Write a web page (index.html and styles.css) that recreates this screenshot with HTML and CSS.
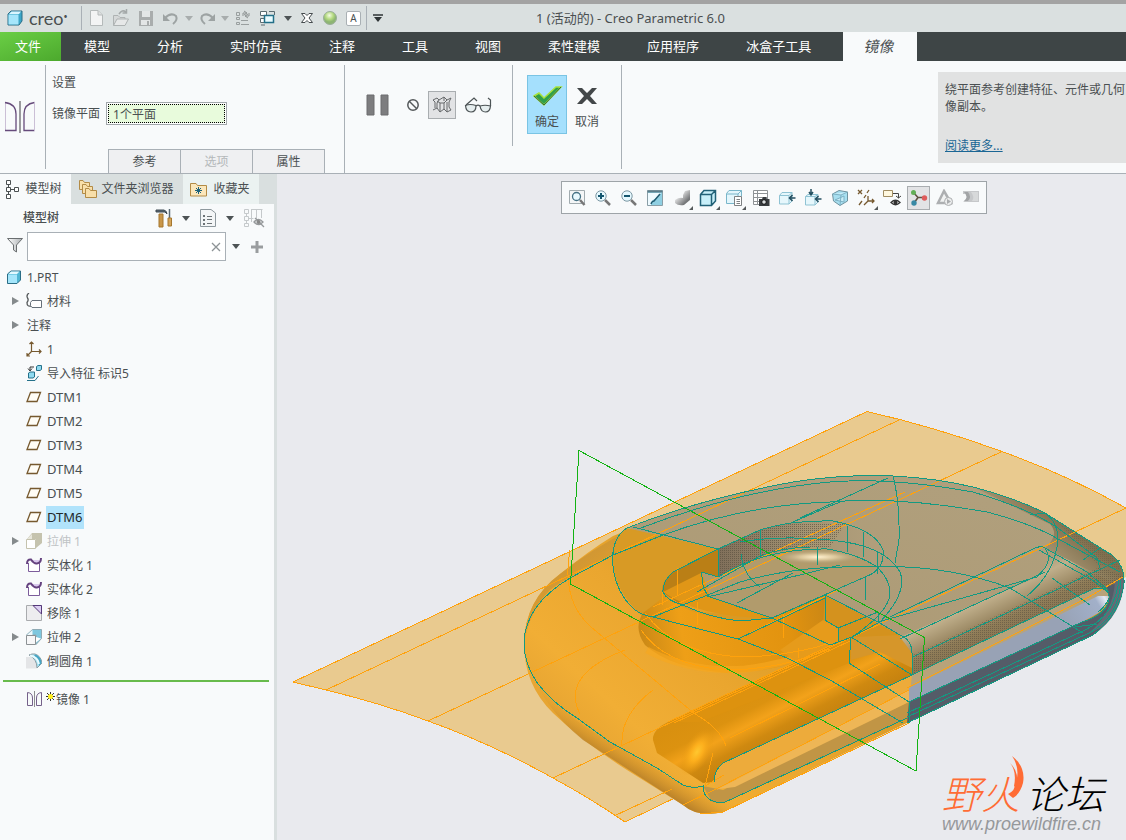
FILE: index.html
```html
<!DOCTYPE html>
<html lang="zh-CN">
<head>
  <meta charset="UTF-8">
  <meta name="viewport" content="width=device-width, initial-scale=1.0">
  <title>1 (活动的) - Creo Parametric 6.0</title>
  <link rel="stylesheet" href="styles.css">
</head>
<body>
  <header class="titlebar">
    <div class="brand">
      <svg width="16" height="16" viewBox="0 0 16 16"><path d="M1 4L4 1H15V11L12 15H1Z" fill="#3ba6c8" stroke="#2b6d86"/><path d="M1.500 4.500H11.500V14.500H1.500Z" fill="#a5e6fb"/><path d="M2 4L4.500 1.500H14L12 4Z" fill="#d9f6ff"/></svg>
      <span class="brand-name">creo<sup>•</sup></span>
    </div>
    <div class="quick">
      <button aria-label="新建"><svg width="16" height="18" viewBox="0 0 16 18"><path d="M2.500 1.500H10L14.500 6V16.500H2.500Z" fill="#f3f4f4" stroke="#b5baba"/><path d="M10 1.500V6H14.500" fill="#dcdfdf" stroke="#b5baba"/></svg></button>
      <button aria-label="打开"><svg width="18" height="18" viewBox="0 0 18 18"><path d="M1.500 16.500V6.500H6L8 8.500H13V10" fill="#d5d8d8" stroke="#aeb3b3"/><path d="M1.500 16.500L5 10H16.500L13 16.500Z" fill="#e6e8e8" stroke="#aeb3b3"/><path d="M7 5Q10 0 14 3M14.500 0V4H10.500" fill="none" stroke="#a4a9a9" stroke-width="1.500"/></svg></button>
      <button aria-label="保存"><svg width="16" height="18" viewBox="0 0 16 18"><path d="M1 2H15V17H1Z" fill="#a9adad"/><path d="M4 2H12V8H4ZM3 11H12V16H3Z" fill="#e3e6e6"/><path d="M9 12h2v4h-2z" fill="#a9adad"/></svg></button>
      <button aria-label="撤消"><svg width="18" height="16" viewBox="0 0 18 16"><path d="M3 8Q9 2 14 6Q16 10 11 14" fill="none" stroke="#9da3a3" stroke-width="2"/><path d="M1 4V11H8Z" fill="#9da3a3"/></svg></button>
      <span class="caret dim"></span>
      <button aria-label="重做"><svg width="18" height="16" viewBox="0 0 18 16"><path d="M15 8Q9 2 4 6Q2 10 7 14" fill="none" stroke="#9da3a3" stroke-width="2"/><path d="M17 4V11H10Z" fill="#9da3a3"/></svg></button>
      <span class="caret dim"></span>
      <button aria-label="重新生成"><svg width="16" height="16" viewBox="0 0 16 16"><path d="M1.500 2.500h3v3h-3zM1.500 7.500h3v2h-3zM1.500 12.500h3v2h-3zM6 10.500h7M6 14.500h8" fill="none" stroke="#999f9f"/><path d="M8 6V3H11M9 1l3 2-3 2M14 3V6H11M13 8L10 6l3-2" fill="none" stroke="#8e9494"/></svg></button>
      <button aria-label="窗口"><svg width="17" height="16" viewBox="0 0 17 16"><path d="M1.500 1.500H7.500V5.500H1.500ZM1.500 8.500H6.500V12.500H1.500Z" fill="#fff" stroke="#5c6b70"/><path d="M10 1.500H15.500V5" fill="none" stroke="#5c6b70"/><path d="M5.500 5.500H14.500V12.500H5.500Z" fill="#e9fbff" stroke="#236f88" stroke-width="1.500"/><path d="M2 15h4" stroke="#5c6b70"/></svg></button>
      <span class="caret"></span>
      <button aria-label="关闭"><svg width="14" height="14" viewBox="0 0 14 14"><path d="M1.500 2.500H5L7 4.500L9 2.500H12.500L9 7L12.500 11.500H9L7 9.500L5 11.500H1.500L5 7Z" fill="#fff" stroke="#454b4e"/></svg></button>
      <button aria-label="着色"><svg width="16" height="16" viewBox="0 0 16 16"><defs><radialGradient id="ball" cx=".45" cy=".3"><stop offset="0" stop-color="#f4fbe5"/><stop offset=".6" stop-color="#b4da80"/><stop offset="1" stop-color="#8db573"/></radialGradient></defs><circle cx="8" cy="8" r="6.500" fill="url(#ball)" stroke="#9aae9a"/></svg></button>
      <button class="letter-button" aria-label="文本">A</button>
    </div>
    <button class="customize" aria-label="自定义"><svg width="10" height="8" viewBox="0 0 10 8"><path d="M0 1H10" stroke="#2e3436" stroke-width="1.500"/><path d="M1 3H9L5 8Z" fill="#2e3436"/></svg></button>
    <h1 class="window-title">1 (活动的) - Creo Parametric 6.0</h1>
  </header>

  <nav class="tabs">
    <a class="file" href="#">文件</a>
    <div class="tab-list">
      <a href="#">模型</a>
      <a href="#">分析</a>
      <a href="#">实时仿真</a>
      <a href="#">注释</a>
      <a href="#">工具</a>
      <a href="#">视图</a>
      <a href="#">柔性建模</a>
      <a href="#">应用程序</a>
      <a href="#">冰盒子工具</a>
    </div>
    <a class="current" href="#">镜像</a>
  </nav>

  <section class="ribbon">
    <div class="feature-icon">
      <svg width="32" height="34" viewBox="0 0 32 34"><path d="M1.500 31V2.500" stroke="#cbbfd6"/><path d="M1 2.500Q12 4 12 14V30.500H1M30.500 2.500Q20 4 20 14V30.500H30.500" fill="none" stroke="#664b7b" stroke-width="1.300"/><path d="M30.500 31V2.500" stroke="#cbbfd6"/><path d="M16 1V33" stroke="#9a9a9d" stroke-width="2"/></svg>
    </div>
    <div class="settings">
      <h2>设置</h2>
      <div class="field">
        <label for="plane">镜像平面</label>
        <span class="plane-box"><input id="plane" type="text" value="1个平面"></span>
      </div>
      <div class="panel-tabs">
        <button>参考</button>
        <button disabled>选项</button>
        <button>属性</button>
      </div>
    </div>
    <div class="preview">
      <button aria-label="暂停"><svg width="24" height="24" viewBox="0 0 24 24"><path d="M1 2h7v20H1zM15 2h7v20h-7z" fill="#7d7d7f" stroke="#6c6c6e"/></svg></button>
      <button class="none" aria-label="无预览"><svg width="14" height="14" viewBox="0 0 14 14"><circle cx="7" cy="7" r="5.200" fill="none" stroke="#55595b" stroke-width="1.500"/><path d="M3 3L11 11" stroke="#55595b" stroke-width="1.500"/></svg></button>
      <button class="pressed" aria-label="附加预览"><svg width="20" height="18" viewBox="0 0 20 18"><path d="M1 4L5 2L7 4L5 7V12L1 14M1 4L3 6V12M7 4L12 1L15 4L12 7L8 7L5 5M8 7V16L12 13V7M5 12L8 16M15 4L19 2L17 6V11L19 14L15 16V6M12 13L15 16M12 1V5" fill="none" stroke="#66696b"/></svg></button>
      <button aria-label="校验"><svg width="28" height="18" viewBox="0 0 28 18"><path d="M1.500 9.500Q6 7.500 12 9.500Q12 16 7 16T1.500 9.500ZM16 10Q21 8.500 26.500 10Q26 16 21.500 16T16 10Z" fill="#e6eeef" stroke="#4c5355" stroke-width="1.200"/><path d="M2 9L10 2L13 5M12 10Q14 8 16 10M26.500 10V4L24 2" fill="none" stroke="#4c5355" stroke-width="1.200"/></svg></button>
    </div>
    <div class="confirm">
      <button class="ok"><svg width="32" height="30" viewBox="0 0 32 30"><path d="M3 16L8 13L13 18L25 7H30L13 25Z" fill="#2f9f4a" stroke="#a8e23b" stroke-width="1.500"/><path d="M3 16L13 25L30 7" fill="none" stroke="#34663d"/></svg>确定</button>
      <button class="cancel"><svg width="32" height="30" viewBox="0 0 32 30"><path d="M6 8H11L16 13L21 8H26L19 16L26 24H21L16 19L11 24H6L13 16Z" fill="#434749"/></svg>取消</button>
    </div>
    <aside class="help">
      <p>绕平面参考创建特征、元件或几何<br>像副本。</p>
      <a href="#">阅读更多...</a>
    </aside>
  </section>

  <main class="workspace">
    <aside class="navigator">
      <div class="nav-tabs">
        <button class="active"><svg width="14" height="20" viewBox="0 0 14 20"><path d="M1.500 1.500h4v4h-4zM1.500 8.500h4v4h-4zM1.500 15.500h4v4h-4zM9.500 8.500h4v4h-4zM3.500 5.500v3M3.500 12.500v3M5.500 10.500h4" fill="#fff" stroke="#4b5052"/></svg>模型树</button>
        <button class="browser"><svg width="20" height="20" viewBox="0 0 20 20"><g stroke="#b38b46" fill="#f8dfaa"><path d="M1.500 10.500V1.500H5L6.500 3.500H11.500V10.500Z"/><path d="M4.500 14.500V5.500H8L9.500 7.500H14.500V14.500Z"/><path d="M7.500 18.500V9.500H11L12.500 11.500H18.500V18.500Z"/></g></svg>文件夹浏览器</button>
        <button class="favorites"><svg width="17" height="16" viewBox="0 0 17 16"><path d="M.5 15V2.500H6L7.500 4.500H16.500V15Z" fill="#fbe7bb" stroke="#b38b46"/><path d="M8.500 6V13M5 9.500H12M6 7L11 12M11 7L6 12" stroke="#19617c"/></svg>收藏夹</button>
      </div>
      <div class="tree-head">
        <h2>模型树</h2>
        <button aria-label="设置"><svg width="18" height="20" viewBox="0 0 18 20"><path d="M1 2H9Q12 3 12 6L10 4H1Z" fill="#5a6974" stroke="#3f4a52"/><path d="M4 6H8V19H4Z" fill="#c99649" stroke="#a5772f"/><path d="M14.500 1V10" stroke="#5a6974" stroke-width="1.500"/><path d="M13 10H16.500V18H13Z" fill="#d5a55a" stroke="#a5772f"/></svg></button>
        <span class="caret"></span>
        <button aria-label="显示"><svg width="18" height="20" viewBox="0 0 18 20"><path d="M1.500 1.500H12L16.500 5V18.500H1.500Z" fill="#f4f6f7" stroke="#8e989d"/><path d="M8 8.500H13M8 11.500H13M8 15.500H13" stroke="#6c7376"/><path d="M4 7h2v2H4zM4 11h2v2H4zM4 15h2v2H4z" fill="#6c7376"/></svg></button>
        <span class="caret"></span>
        <button aria-label="隐藏项"><svg width="22" height="20" viewBox="0 0 22 20"><path d="M1.500 1.500h4v4h-4zM1.500 8.500h4v4h-4zM1.500 15.500h4v3h-4zM3.500 5.500v3M3.500 12.500v3M5.500 10.500h5M8.500 1V14M13.500 1V12M18.500 1V10M8.500 1.500h11" fill="none" stroke="#c5c9cb"/><path d="M11 14Q15.500 9 20 14Q15.500 19 11 14ZM12 10L21 19" fill="#e9ebec" stroke="#96999b" stroke-width="1.300"/><circle cx="15.500" cy="14" r="2" fill="#888"/></svg></button>
      </div>
      <div class="search">
        <label for="filter" aria-label="过滤器"><svg width="18" height="16" viewBox="0 0 18 16"><defs><linearGradient id="funnel"><stop offset="0" stop-color="#fff"/><stop offset="1" stop-color="#a9adb0"/></linearGradient></defs><path d="M1.500 1.500H16.500L10.500 8V15L7.500 13V8Z" fill="url(#funnel)" stroke="#6a6e70"/></svg></label>
        <div class="search-box">
          <input id="filter" type="text">
          <button aria-label="清除"><svg width="10" height="10" viewBox="0 0 10 10"><path d="M1 1L9 9M9 1L1 9" stroke="#8d9396" stroke-width="1.300"/></svg></button>
        </div>
        <span class="caret"></span>
        <button aria-label="添加"><svg width="12" height="12" viewBox="0 0 12 12"><path d="M6 0V12M0 6H12" stroke="#9a9d9f" stroke-width="3"/></svg></button>
      </div>

      <ul class="tree">
        <li class="root"><svg width="16" height="16" viewBox="0 0 16 16"><path d="M1.500 5L5 2H14.500V11L11 14.500H1.500Z" fill="#4fb6d3" stroke="#2b6d86"/><path d="M2 5.500H11V14H2Z" fill="#a5e6fb"/><path d="M2.500 5L5 2.500H13.500L11 5Z" fill="#e2f9ff"/></svg><span>1.PRT</span></li>
        <li><button class="arrow" aria-label="展开"></button><svg width="16" height="16" viewBox="0 0 16 16"><path d="M3 0Q0 2 1.500 5Q3 7 1 9.500Q1 14 5 13" fill="none" stroke="#55595b" stroke-width="1.300"/><path d="M4.500 9.500L6 7.500H15.500V14.500H6L4.500 12.500Z" fill="#fff" stroke="#66707a"/></svg><span>材料</span></li>
        <li class="no-icon"><button class="arrow" aria-label="展开"></button><span>注释</span></li>
        <li><svg width="16" height="16" viewBox="0 0 16 16"><path d="M5.500 1V10.500H15M5.500 10.500L1 15M3.500 3L5.500 1L7.500 3M13 8.500L15 10.500L13 12.500M1 12V15H4" fill="none" stroke="#76592f" stroke-width="1.200"/></svg><span>1</span></li>
        <li><svg width="16" height="16" viewBox="0 0 16 16"><path d="M10.500 1.500L12 .5H15.500V4.500L14 5.500H10.500Z" fill="#8fdaf0" stroke="#25718a"/><path d="M8 2H4V5M2 3.500L4 6L6 3.500" fill="none" stroke="#333"/><path d="M2.500 8L4 7H8.500V12L7 13H2.500Z" fill="#8fdaf0" stroke="#25718a"/><path d="M1 15.500H9L12.500 11" fill="none" stroke="#25718a"/></svg><span>导入特征 标识5</span></li>
        <li class="datum"><svg width="16" height="16" viewBox="0 0 16 16"><path d="M4.500 3.500H14.500L11 12.500H1Z" fill="#fffdf6" stroke="#76592f" stroke-width="1.300"/></svg><span>DTM1</span></li>
        <li class="datum"><svg width="16" height="16" viewBox="0 0 16 16"><path d="M4.500 3.500H14.500L11 12.500H1Z" fill="#fffdf6" stroke="#76592f" stroke-width="1.300"/></svg><span>DTM2</span></li>
        <li class="datum"><svg width="16" height="16" viewBox="0 0 16 16"><path d="M4.500 3.500H14.500L11 12.500H1Z" fill="#fffdf6" stroke="#76592f" stroke-width="1.300"/></svg><span>DTM3</span></li>
        <li class="datum"><svg width="16" height="16" viewBox="0 0 16 16"><path d="M4.500 3.500H14.500L11 12.500H1Z" fill="#fffdf6" stroke="#76592f" stroke-width="1.300"/></svg><span>DTM4</span></li>
        <li class="datum"><svg width="16" height="16" viewBox="0 0 16 16"><path d="M4.500 3.500H14.500L11 12.500H1Z" fill="#fffdf6" stroke="#76592f" stroke-width="1.300"/></svg><span>DTM5</span></li>
        <li class="datum selected"><svg width="16" height="16" viewBox="0 0 16 16"><path d="M4.500 3.500H14.500L11 12.500H1Z" fill="#fffdf6" stroke="#76592f" stroke-width="1.300"/></svg><span>DTM6</span></li>
        <li class="suppressed"><button class="arrow" aria-label="展开"></button><svg width="16" height="16" viewBox="0 0 16 16"><path d="M1 6L6 0H16V10L10 15V6Z" fill="#c5c3ae"/><path d="M.5 6.500H9.500V15.500H.5Z" fill="#fff" stroke="#c5c3ae"/><path d="M1 6L6 1V6Z" fill="#e7e6dc"/></svg><span>拉伸 1</span></li>
        <li><svg width="16" height="16" viewBox="0 0 16 16"><path d="M2.500 6V14.500H13.500V6" fill="#fff" stroke="#7c5c9b"/><path d="M5 3Q8 8 11 7L14 5L13 3Z" fill="#d9c8ec"/><path d="M1 7Q1 2 5 2.500Q8 7 11 6.500Q15 6 15 1" fill="none" stroke="#65427f" stroke-width="2"/></svg><span>实体化 1</span></li>
        <li><svg width="16" height="16" viewBox="0 0 16 16"><path d="M2.500 6V14.500H13.500V6" fill="#fff" stroke="#7c5c9b"/><path d="M5 3Q8 8 11 7L14 5L13 3Z" fill="#d9c8ec"/><path d="M1 7Q1 2 5 2.500Q8 7 11 6.500Q15 6 15 1" fill="none" stroke="#65427f" stroke-width="2"/></svg><span>实体化 2</span></li>
        <li><svg width="16" height="16" viewBox="0 0 16 16"><path d="M.5 .5H15.500V15.500H.5Z" fill="#ededef" stroke="#a9abae"/><path d="M7 .5H15.500V9Z" fill="#dccff2" stroke="#55397a"/></svg><span>移除 1</span></li>
        <li><button class="arrow" aria-label="展开"></button><svg width="16" height="16" viewBox="0 0 16 16"><path d="M.5 6L6.500 .5H15.500V9.500L10 15.500V6Z" fill="#7ec7de" stroke="#8faab4"/><path d="M1 6L6.500 1V6Z" fill="#eef8fb"/><path d="M10 13.500L15 9.500L10 8Z" fill="#fff"/><path d="M.5 6.500H9.500V15.500H.5Z" fill="#f7f7f8" stroke="#8c9194"/></svg><span>拉伸 2</span></li>
        <li><svg width="16" height="16" viewBox="0 0 16 16"><path d="M0 4H6Q11 6 11 15.500H0Z" fill="#e4e5e7"/><path d="M3 2Q6 .5 9 1Q15 3 16 10L11 15Q11 6 3 2Z" fill="#a9e4f5" stroke="#8c9ca2"/><path d="M8 3Q13 6 13 13L15.500 10Q15 3 9 1.500" fill="#45a5c4"/><path d="M4 2.500Q12 4 13 11" fill="none" stroke="#e9fbff" stroke-width="2"/></svg><span>倒圆角 1</span></li>
      </ul>
      <div class="insert-line"></div>
      <ul class="tree pending">
        <li><svg width="16" height="16" viewBox="0 0 16 16"><path d="M1.500 1.500Q6.500 2 6.500 7V14.500H1.500ZM15.500 1.500Q10.500 2 10.500 7V14.500H15.500Z" fill="none" stroke="#75618a"/><path d="M8.500 0V16" stroke="#8d8d90"/></svg><svg class="spark" width="9" height="9" viewBox="0 0 9 9"><path d="M4.500 0V9M0 4.500H9M1 1L8 8M8 1L1 8" stroke="#333"/><circle cx="4.500" cy="4.500" r="2.500" fill="#ffef1c"/></svg><span>镜像 1</span></li>
      </ul>
    </aside>

    <section class="viewport">
      <svg class="model" viewBox="277 174 849 666" preserveAspectRatio="xMinYMin slice" role="img" aria-label="镜像预览">
        <defs>
          <linearGradient id="shell" gradientUnits="userSpaceOnUse" x1="545" y1="730" x2="720" y2="540">
            <stop offset="0" stop-color="#e3a131"/><stop offset=".25" stop-color="#f1ae35"/><stop offset=".6" stop-color="#eaa62f"/><stop offset="1" stop-color="#d89a26"/>
          </linearGradient>
          <linearGradient id="rim" gradientUnits="userSpaceOnUse" x1="600" y1="755" x2="615" y2="730">
            <stop offset="0" stop-color="#b98129"/><stop offset="1" stop-color="#eba72e" stop-opacity="0"/>
          </linearGradient>
          <linearGradient id="shoulder" gradientUnits="userSpaceOnUse" x1="570" y1="550" x2="600" y2="595">
            <stop offset="0" stop-color="#cb9436"/><stop offset="1" stop-color="#e3a12c"/>
          </linearGradient>
          <linearGradient id="top" gradientUnits="userSpaceOnUse" x1="900" y1="475" x2="850" y2="640">
            <stop offset="0" stop-color="#b09f7c"/><stop offset="1" stop-color="#ad9b76"/>
          </linearGradient>
          <linearGradient id="side" gradientUnits="userSpaceOnUse" x1="990" y1="585" x2="1010" y2="628">
            <stop offset="0" stop-color="#ad9c79"/><stop offset=".25" stop-color="#c0af8b"/><stop offset=".8" stop-color="#8f7c57"/><stop offset="1" stop-color="#8b7855"/>
          </linearGradient>
          <linearGradient id="edge" gradientUnits="userSpaceOnUse" x1="1085" y1="540" x2="1055" y2="575">
            <stop offset="0" stop-color="#80704f"/><stop offset="1" stop-color="#b2a07c"/>
          </linearGradient>
          <linearGradient id="groove" gradientUnits="userSpaceOnUse" x1="765" y1="680" x2="795" y2="738">
            <stop offset="0" stop-color="#d9900f"/><stop offset=".3" stop-color="#dc9210"/><stop offset=".5" stop-color="#f3a21a"/><stop offset=".75" stop-color="#cf8910"/><stop offset="1" stop-color="#c3800f"/>
          </linearGradient>
          <linearGradient id="pocket" gradientUnits="userSpaceOnUse" x1="640" y1="640" x2="850" y2="610">
            <stop offset="0" stop-color="#c98816"/><stop offset=".2" stop-color="#ee9f17"/><stop offset=".7" stop-color="#e2930f"/><stop offset="1" stop-color="#bd8019"/>
          </linearGradient>
          <linearGradient id="wall" gradientUnits="userSpaceOnUse" x1="720" y1="560" x2="870" y2="540">
            <stop offset="0" stop-color="#81705b"/><stop offset=".6" stop-color="#a59573"/><stop offset="1" stop-color="#b09e7b"/>
          </linearGradient>
          <linearGradient id="silver" gradientUnits="userSpaceOnUse" x1="1060" y1="620" x2="1110" y2="590">
            <stop offset="0" stop-color="#98a2b5"/><stop offset=".7" stop-color="#a2b0c9"/><stop offset=".85" stop-color="#e3e8f2"/><stop offset="1" stop-color="#a5a9ad"/>
          </linearGradient>
          <radialGradient id="shine"><stop offset="0" stop-color="#fff1cf"/><stop offset=".4" stop-color="#dbc79b"/><stop offset="1" stop-color="#ac9b77" stop-opacity="0"/></radialGradient>
          <radialGradient id="glow"><stop offset="0" stop-color="#ffc72f"/><stop offset=".4" stop-color="#fcae1c"/><stop offset="1" stop-color="#e79912" stop-opacity="0"/></radialGradient>
          <pattern id="dots" width="2" height="2" patternUnits="userSpaceOnUse"><rect width="1" height="1" fill="#5c5240"/></pattern>
        </defs>

        <!-- sheet -->
        <path d="M293 682L867 411.500Q935 427 1002 451.500Q1065 474 1126 508V577L625 822Q590 798 553 778Q490 743 428 721Q380 703 326 690Z" fill="#e9ca8f"/>
        <path class="sheet-edge" d="M1126 508Q1065 474 1002 451.500Q935 427 867 411.500L293 682L326 690Q380 703 428 721Q490 743 553 778Q590 798 625 822L683 794"/>

        <!-- whole body -->
        <path d="M524 643Q525 600 560 574Q590 550 613 536L633 528Q700 499 793 482Q843 474 893 476Q935 478 973 487Q1015 498 1045 513L1083 537L1112 555Q1125 566 1124 583Q1120 615 1093 635L907 723L723 812Q698 818 683 805L627 770Q583 742 553 713Q524 685 524 643Z" fill="url(#shell)"/>
        <path d="M524 643Q525 600 560 574Q590 550 633 528L613 555Q570 575 550 590Q530 610 524 643Z" fill="url(#shoulder)"/>
        <path d="M527 660Q540 705 583 740L683 805Q698 818 723 812L909 723V702L723 775L703 786L683 785L610 742Q537 700 527 660Z" fill="url(#rim)"/>
        <path d="M703 786L712 802L723 803L909 718V702L723 790Z" fill="#c19545"/>
        <path d="M627 528L718 549L670 575Q660 590 675 602L700 612L772 618L825 595L912 650L850 680L738 639L643 617Q613 590 613 560Q615 535 627 528Z" fill="#d89a25"/>

        <!-- recess of the preview half -->
        <path d="M643 613Q633 628 645 645Q670 668 727 673Q775 673 830 650L912 610L825 595L772 618Q700 625 665 596Z" fill="url(#pocket)"/>
        <path d="M647 650Q690 673 745 669Q790 664 835 643L860 630" fill="none" stroke="#f7a81e" stroke-width="7" opacity=".65"/>
        <path d="M718 549L673 572Q662 580 662 592L680 604L703 597L718 577Z" fill="#ba7f16"/>
        <path d="M663 592L703 572L710 597L772 618Q700 618 663 592Z" fill="#e09617"/>
        <path d="M825 595L878 622L900 635L838 650L823 625Z" fill="#d4921e"/>
        <path d="M823 620L838 628V642L800 664L780 650Z" fill="#e69b1b"/>

        <!-- groove -->
        <path d="M653 740Q652 730 668 722L838 642L852 637L900 635L912 653V675L723 763Q714 770 714 782L703 783L657 753Z" fill="url(#groove)"/>
        <path d="M668 722L838 642L851 637L849 663L700 722Z" fill="#dd920f"/>
        <path d="M851 637L900 635L912 653V668L880 652L851 660Z" fill="#d6962a"/>
        <path d="M723 763L912 675V690L717 790L714 782Q714 770 723 763Z" fill="#edab3b"/>
        <path d="M718 789L909 690V702L735 787Z" fill="#eeb656"/>
        <ellipse cx="697" cy="752" rx="26" ry="13" transform="rotate(-60 697 752)" fill="url(#glow)"/>

        <!-- solid half -->
        <path d="M627 528Q700 499 793 482Q843 474 893 476Q935 478 973 487Q1015 498 1045 513L1083 537L1112 555Q1125 566 1124 583L1100 580L912 675V653L900 635L825 595L772 618L710 597L702 572L718 577V549Z" fill="url(#top)"/>
        <path d="M973 487Q1015 498 1045 513L1112 555Q1125 566 1124 583L1108 590L1045 548Q1060 535 1050 524Z" fill="url(#edge)"/>
        <path d="M900 637L1037 577Q1050 568 1047 549L1108 580L1124 578L1119 597L1098 587L912 675V653Z" fill="url(#side)"/>
        <path d="M913 655L1100 567L1124 576L1120 597L1098 587L912 675Z" fill="url(#dots)" opacity=".6"/>
        <path d="M1060 524L1083 537L1112 555L1122 570L1098 565Z" fill="url(#dots)" opacity=".35"/>
        <path d="M912 675L1095 588Q1108 587 1109 598Q1106 607 1095 612L909 702Z" fill="#b8a37a"/>
        <path d="M909 688L1098 596L1109 596Q1106 610 1093 616L1060 634L909 702Z" fill="url(#silver)"/>
        <path d="M909 702L1082 622Q1108 612 1109 598L1107 587L1124 580Q1123 615 1093 635L907 723Z" fill="#545c68"/>
        <path d="M1115 580L1124 578Q1122 612 1100 628L1088 634Q1114 612 1115 580Z" fill="#626c76"/>

        <!-- recess of the solid half -->
        <path d="M718 549L760 530Q790 520 830 521Q865 528 880 545L875 567Q850 549 810 547Q770 548 718 577Z" fill="url(#wall)"/>
        <path d="M718 549L760 530Q790 520 845 524L830 547Q780 545 718 577Z" fill="url(#dots)" opacity=".7"/>
        <path d="M702 572L718 577Q770 548 810 547Q850 549 877 567L865 577L772 618L710 597Z" fill="#b19b6c"/>
        <ellipse cx="818" cy="557" rx="45" ry="7" fill="url(#shine)"/>

        <g class="orange-lines">
          <path d="M326 690L899 420M428 721L1002 451.500M553 778L1126 508M614 816L672 789"/>
          <path d="M683 805L714 790M907 688L1087 598L1123 577M700 814L723 812L909 723M714 790L909 690M668 722L838 642M674 723L850 641M730 738L880 664"/>
          <path d="M570 550Q560 605 597 632L695 714Q720 728 726 746M625 650Q560 675 580 714M653 690Q620 715 622 745M713 753L705 786L724 775"/>
          <path d="M645 613Q675 655 745 657Q795 655 830 643M641 630Q665 665 725 670Q780 670 830 649M662 590V605M677 568V595M697 602V625M783 613V638M798 648V658"/>
          <path d="M653 607L718 577L905 492M738 639L838 590"/>
        </g>

        <g class="teal-lines">
          <path d="M627 528Q700 499 793 482Q843 474 893 476Q935 478 973 487Q1015 498 1045 513L1083 537L1112 555Q1125 566 1124 583Q1120 615 1093 635L907 723"/>
          <path d="M638 529Q740 490 830 482Q890 477 973 492Q1030 509 1058 528L1097 558L1100 568"/>
          <path d="M524 643Q525 605 570 578L613 555L663 535Q745 505 830 502Q897 496 987 512Q1033 524 1060 540L1120 572"/>
          <path d="M524 643Q524 685 577 718L610 742L657 768L683 785Q692 789 703 786Q703 802 723 803L907 718"/>
          <path d="M627 528C605 540 610 585 630 605Q638 615 653 617L738 639L787 658L830 680L903 723"/>
          <path d="M633 527L718 549V577M718 549L673 572Q662 582 663 592Q667 601 683 605Q710 618 740 621L772 618M702 572L718 577M702 572Q701 590 710 597L772 618L825 595L878 622L900 635Q912 640 912 653V675"/>
          <path d="M718 549L760 530Q790 520 833 521Q875 529 883 550Q885 570 865 577L772 618"/>
          <path d="M718 577Q765 548 827 549Q858 554 877 567Q890 579 890 594Q888 613 852 637L830 645"/>
          <path d="M740 542Q780 535 830 540Q885 545 900 572Q908 592 880 622L852 637M697 592L760 556Q780 548 810 547"/>
          <path d="M760 530V556M741 554Q743 575 760 587M817 547V565M847 526V552M863 532V557M865 577V600M877 552V574M878 612V622"/>
          <path d="M653 617L740 582Q800 565 863 567Q943 563 1010 588L1083 633M707 597Q760 585 840 565M737 603L793 573"/>
          <path d="M893 476Q900 503 899 540L895 563M800 518L888 478M793 522L830 506L843 501"/>
          <path d="M738 639L825 598M825 595V620L838 628V642L830 645M838 628L878 612M772 618L830 645"/>
          <path d="M890 617L1033 549Q1040 545 1045 548Q1052 558 1045 568L1037 577L878 622M900 639L1045 572M1045 548L1087 572L1108 590M1039 550L1092 580L1109 592"/>
          <path d="M1030 515L1045 513Q1058 522 1058 540Q1055 573 1027 596M1083 560L1100 548L1112 555"/>
          <path d="M913 657L1120 560M912 675L1095 588Q1110 588 1109 598Q1106 606 1098 612M1052 578L1090 605"/>
          <path d="M851 637L849 663L909 702M851 637L912 675L723 763Q714 770 714 782M909 702L1082 622Q1108 614 1109 598M909 702V723"/>
          <path d="M907 713L1085 630Q1115 615 1119 580M907 717L1089 633Q1119 618 1121 580M1075 627L1097 624"/>
        </g>

        <path class="mirror-plane" d="M579 450.500L924.500 637.500L916 771L570.500 584Z"/>
      </svg>

      <div class="view-tools">
        <button aria-label="重新调整"><svg width="18" height="18" viewBox="0 0 18 18"><path d="M1.500 1.500H16.500V14.500H1.500Z" fill="#f4f6f7" stroke="#a1abaf"/><circle cx="8.500" cy="7.500" r="4" fill="#e9f9ff" stroke="#457184" stroke-width="1.300"/><path d="M12 11L16.500 16" stroke="#777" stroke-width="2.500"/></svg></button>
        <button aria-label="放大"><svg width="18" height="18" viewBox="0 0 18 18"><circle cx="7" cy="7" r="5.200" fill="#e5f8fe" stroke="#7d98a4"/><path d="M4 7H10M7 4V10" stroke="#14566f" stroke-width="2"/><path d="M11 11L16 16" stroke="#777" stroke-width="2.500"/></svg></button>
        <button aria-label="缩小"><svg width="18" height="18" viewBox="0 0 18 18"><circle cx="7" cy="7" r="5.200" fill="#e5f8fe" stroke="#7d98a4"/><path d="M4 7H10" stroke="#14566f" stroke-width="2"/><path d="M11 11L16 16" stroke="#777" stroke-width="2.500"/></svg></button>
        <button aria-label="重画"><svg width="18" height="18" viewBox="0 0 18 18"><path d="M1.500 1.500H16.500V16.500H1.500Z" fill="#8fcfe2" stroke="#8a9ea6"/><path d="M2 4H15L9 10Q5 11 5 16H2Z" fill="#eefaff"/><path d="M1.500 2.500H16.500" stroke="#5b7d8a" stroke-width="2"/><path d="M5 15Q6 12 8 12L14 5" fill="none" stroke="#205b70" stroke-width="1.500"/></svg></button>
        <button class="more" aria-label="渲染"><svg width="18" height="18" viewBox="0 0 18 18"><defs><linearGradient id="metal" x2="1" y2="1"><stop offset=".2" stop-color="#fff"/><stop offset=".75" stop-color="#76787a"/></linearGradient></defs><path d="M2 11Q6 8 10 9V6L12 2L17 1V11L11 16Q5 17 2 14Z" fill="url(#metal)"/></svg></button>
        <button class="more" aria-label="显示样式"><svg width="18" height="18" viewBox="0 0 18 18"><path d="M1.500 5.500L5 1.500H16.500V12L12.500 16.500H1.500ZM1.500 5.500H12.500V16.500M12.500 5.500L16.500 1.500" fill="#c8eff9" stroke="#226177" stroke-width="1.500"/></svg></button>
        <button class="more" aria-label="已保存方向"><svg width="18" height="18" viewBox="0 0 18 18"><path d="M1.500 4.500L4 1.500H16.500V7L13 10V14.500H1.500ZM1.500 5H13M13 5V10M13 5L16.500 1.500" fill="#e3f6fc" stroke="#79b6ca"/><path d="M9.500 7.500H16.500V16.500H9.500ZM11.500 10.500H15M11.500 12.500H15M11.500 14.500H15" fill="#fff" stroke="#7d8183"/></svg></button>
        <button aria-label="视图管理器"><svg width="18" height="18" viewBox="0 0 18 18"><path d="M1.500 1.500H15.500V15.500H1.500ZM1.500 4.500H15.500M1.500 8.500H15.500M1.500 12.500H15.500M5.500 1.500V15.500" fill="#fff" stroke="#8f9396"/><path d="M7 10H10L11 8H14L15 10H17.500V17H7Z" fill="#383c3f"/><circle cx="12" cy="13" r="2.300" fill="#d9dddf" stroke="#111"/></svg></button>
        <button aria-label="外观"><svg width="18" height="18" viewBox="0 0 18 18"><path d="M1.500 6.500L4 3.500H14V12L11 15H1.500ZM1.500 6.500H11V15M11 6.500L14 3.500" fill="#e6f7fc" stroke="#8fc3d4"/><path d="M17.500 9H12M14.500 6L11.500 9L14.500 12" fill="none" stroke="#244f60" stroke-width="1.600"/></svg></button>
        <button aria-label="剖切"><svg width="18" height="18" viewBox="0 0 18 18"><path d="M1.500 7.500L4 5.500H14V13L11 16H1.500ZM1.500 7.500H11V16M11 7.500L14 5.500" fill="#e6f7fc" stroke="#8fc3d4"/><path d="M17.500 10H12M14.500 7L11.500 10L14.500 13M7 0V5M5 3L7 6L9 3" fill="none" stroke="#244f60" stroke-width="1.500"/></svg></button>
        <button aria-label="透视"><svg width="18" height="18" viewBox="0 0 18 18"><path d="M1.500 5L8 1.500L16.500 3V12L9 16.500L2.500 12Z" fill="#a7dff0" stroke="#6f929f"/><path d="M1.500 5L10 6L16.500 3M10 6L9 16.500M4 11L13 7V13Z" fill="#c9edf8" stroke="#7db2c5"/></svg></button>
        <button class="more" aria-label="基准显示"><svg width="18" height="18" viewBox="0 0 18 18"><path d="M1 1L5 5M5 1L1 5M12 1L10 4M9 6L7 9M5 12L2 16M11 7V12H17M11 12L7 16M15 10L17 12L15 14" fill="none" stroke="#76592f" stroke-width="1.300"/></svg></button>
        <button aria-label="注释显示"><svg width="18" height="18" viewBox="0 0 18 18"><path d="M.5 1.500H9.500V7.500H.5Z" fill="#fff8df" stroke="#a08c62"/><path d="M10 4.500H15.500V9M13 7L15.500 9L18 7" fill="none" stroke="#444"/><path d="M8 13.500Q12.500 9 17 13.500Q12.500 18 8 13.500Z" fill="#fff" stroke="#333" stroke-width="1.300"/><circle cx="12.500" cy="13.500" r="2" fill="#333"/></svg></button>
        <button class="pressed" aria-label="旋转中心"><svg width="18" height="18" viewBox="0 0 18 18"><path d="M3 3L8 8.500L4 14M8 8.500H14" fill="none" stroke="#5f5040" stroke-width="1.600"/><circle cx="3.500" cy="3.500" r="2.500" fill="#62ae56"/><circle cx="4" cy="14" r="2.700" fill="#3889a5"/><circle cx="14.500" cy="9" r="2.700" fill="#de5c5c"/></svg></button>
        <button aria-label="仿真"><svg width="18" height="18" viewBox="0 0 18 18"><path d="M8 2L15 14H2Z" fill="#f1f2f2" stroke="#adafb1" stroke-width="2.500"/><circle cx="12.500" cy="12.500" r="4" fill="#eceded" stroke="#adafb1"/><path d="M11 10L15 12.500L11 15Z" fill="#a9abad"/></svg></button>
        <button aria-label="流体"><svg width="18" height="18" viewBox="0 0 18 18"><path d="M1 2H17V13H1L5 10Q9 8 5 5H1Z" fill="#c6c8ca"/><path d="M2 3H6Q10 8 6 12H2Q7 8 2 3Z" fill="#a2a4a6"/><path d="M9 3H16V12H10Q13 8 9 3Z" fill="#d7d9da"/></svg></button>
      </div>

      <div class="forum">
        <div class="forum-name"><span>野火</span><b>论坛</b></div>
        <div class="forum-url">www.proewildfire.cn</div>
        <svg class="flame" width="20" height="42" viewBox="0 0 20 42"><path d="M7 0Q21 11 18 27Q15 38 8 42L3 38Q12 34 10 23L12 22Q14 10 7 0Z" fill="#ff6c35"/><path d="M5 7Q12 15 9 30L11 32Q15 16 5 7Z" fill="#ff6c35"/></svg>
      </div>
    </section>
  </main>
</body>
</html>
```

FILE: styles.css
```css
:root {
  --bar: #dae0e0;
  --dark: #3e4546;
  --panel: #f8fafb;
  --line: #a9b0b6;
  --text: #4a4f51;
}
* {
  box-sizing: border-box;
}
body {
  margin: 0;
  min-height: 100vh;
  display: flex;
  flex-direction: column;
  overflow: hidden;
  background: var(--panel);
  color: var(--text);
  font: 12px/16px "Noto Sans", "Noto Sans CJK SC", sans-serif;
}
button {
  display: flex;
  align-items: center;
  justify-content: center;
  padding: 0;
  border: 0;
  background: none;
  color: inherit;
  font: inherit;
}
svg {
  flex: none;
}
h1, h2, p, ul {
  margin: 0;
  padding: 0;
  font-size: 12px;
  font-weight: normal;
}
.caret {
  flex: none;
  border: 4px solid transparent;
  border-top: 5px solid #4d5355;
  border-bottom: 0;
}
.caret.dim {
  margin: 0 -3px;
  border-top-color: #a8adad;
}

/* title bar */
.titlebar {
  display: flex;
  align-items: center;
  height: 32px;
  border-top: 4px solid #a3a3a3;
  background: var(--bar);
}
.brand {
  display: flex;
  align-items: center;
  gap: 6px;
  width: 82px;
  height: 24px;
  padding-left: 7px;
  border-right: 1px solid var(--line);
}
.brand-name {
  font-family: Lato, sans-serif;
  font-size: 18px;
  line-height: 20px;
}
.brand-name sup {
  font-size: 7px;
  line-height: 0;
  vertical-align: 6px;
}
.quick {
  display: flex;
  align-items: center;
  justify-content: space-between;
  width: 285px;
  height: 24px;
  padding: 0 5px 0 6px;
  border-right: 1px solid var(--line);
}
.letter-button {
  width: 15px;
  height: 15px;
  border: 1px solid #a9b0b4;
  border-radius: 2px;
  background: #fff;
  font-size: 10px;
  line-height: 12px;
}
.customize {
  margin-left: 6px;
}
.window-title {
  margin-left: 153px;
  font-size: 13px;
}

/* ribbon tabs */
.tabs {
  display: flex;
  height: 29px;
  background: var(--dark);
  font-size: 13px;
  line-height: 29px;
}
.tabs a {
  color: #fff;
  text-decoration: none;
}
.tabs .file {
  width: 61px;
  padding-right: 5px;
  background: linear-gradient(160deg, #6ace45, #4ca92d);
  text-align: center;
}
.tab-list {
  display: flex;
  gap: 47px;
  padding: 0 32px 0 23px;
}
.tabs .current {
  width: 74px;
  padding-right: 4px;
  background: var(--panel);
  color: var(--text);
  font-size: 15px;
  font-style: italic;
  text-align: center;
}

/* dashboard */
.ribbon {
  display: flex;
  height: 113px;
  border-bottom: 1px solid var(--line);
}
.feature-icon {
  width: 46px;
  margin: 4px 0;
  padding: 35px 0 0 4px;
  border-right: 1px solid var(--line);
}
.settings {
  display: flex;
  flex-direction: column;
  width: 299px;
  margin-top: 4px;
  padding: 10px 0 0 6px;
  border-right: 1px solid var(--line);
}
.field {
  display: flex;
  align-items: center;
  gap: 6px;
  margin-top: 11px;
}
.plane-box {
  padding: 1px;
  border: 1px solid #a2a8ab;
  background: #fff;
}
.plane-box input {
  display: block;
  width: 117px;
  height: 19px;
  padding: 0 4px;
  border: 1px dotted #000;
  background: #e8fbdc;
  color: var(--text);
  font: inherit;
}
.panel-tabs {
  display: flex;
  margin: auto 0 0 56px;
}
.panel-tabs button {
  width: 73px;
  height: 24px;
  margin-right: -1px;
  border: 1px solid var(--line);
  border-bottom: 0;
  background: #eff0f2;
}
.panel-tabs button:disabled {
  color: #b4b8ba;
}
.preview {
  display: flex;
  align-items: center;
  gap: 8px;
  width: 168px;
  height: 81px;
  margin-top: 4px;
  padding: 0 0 2px 21px;
  border-right: 1px solid var(--line);
}
.preview .none {
  margin-left: 8px;
}
.pressed {
  width: 28px;
  height: 28px;
  border: 1px solid #a9adb0;
  background: #e2e3e5;
}
.confirm {
  display: flex;
  align-items: flex-start;
  width: 109px;
  margin: 4px 0;
  padding: 10px 0 0 14px;
  border-right: 1px solid var(--line);
}
.confirm button {
  flex-direction: column;
  gap: 4px;
  width: 40px;
  height: 59px;
  padding-top: 1px;
}
.confirm .ok {
  border: 1px solid #7ac4e4;
  background: #a5e0fd;
}
.help {
  width: 188px;
  height: 91px;
  margin: 11px 0 0 auto;
  padding: 9px 0 0 7px;
  background: #e1e2e2;
  line-height: 17px;
  white-space: nowrap;
}
.help a {
  display: inline-block;
  margin-top: 22px;
  color: #1a6694;
}

/* navigator */
.workspace {
  display: flex;
  flex: 1;
}
.navigator {
  width: 277px;
  border-right: 3px solid #d9dfdf;
}
.nav-tabs {
  display: flex;
  height: 30px;
  background: #d9dfdf;
}
.nav-tabs button {
  gap: 6px;
  padding: 0 2px 1px 0;
}
.nav-tabs .active {
  width: 71px;
  padding-right: 4px;
  background: var(--panel);
}
.nav-tabs .browser {
  gap: 3px;
  width: 112px;
}
.nav-tabs .favorites {
  width: 76px;
  background: #ebf2f1;
}
.tree-head {
  display: flex;
  align-items: center;
  gap: 9px;
  height: 28px;
  padding: 0 9px 0 23px;
}
.tree-head h2 {
  margin-right: auto;
  font-weight: 500;
}
.search {
  display: flex;
  align-items: center;
  height: 29px;
  padding-left: 6px;
}
.search-box {
  display: flex;
  align-items: center;
  width: 199px;
  height: 29px;
  margin: 0 6px 0 3px;
  padding-right: 4px;
  border: 1px solid var(--line);
  background: #fff;
}
.search-box input {
  flex: 1;
  min-width: 0;
  border: 0;
  outline: 0;
}
.search > button {
  margin-left: 11px;
}
.tree {
  padding-top: 4px;
  list-style: none;
}
.tree li {
  display: flex;
  align-items: center;
  height: 24px;
  padding-left: 26px;
}
.tree li span {
  padding: 0 1px;
  margin-left: 4px;
  line-height: 23px;
}
.tree .root {
  padding-left: 6px;
}
.tree .no-icon span {
  margin-left: 0;
}
.tree .datum {
  font-size: 13px;
}
.tree .selected span {
  background: #b1e3fb;
  color: #23282a;
}
.tree .suppressed span {
  color: #bfc3c5;
}
.tree .arrow {
  width: 14px;
  height: 20px;
  margin-left: -14px;
}
.tree .arrow::before {
  content: "";
  margin-right: 8px;
  border: 4px solid transparent;
  border-left: 7px solid #858a8c;
  border-right: 0;
}
.tree .spark {
  margin: -5px 0 0 4px;
}
.tree .spark + span {
  margin-left: 0;
}
.insert-line {
  height: 2px;
  margin: 7px 5px 1px 3px;
  background: #68bb4c;
}

/* graphics window */
.viewport {
  position: relative;
  flex: 1;
  overflow: hidden;
  background: #e9eaee;
}
.model {
  position: absolute;
  width: 100%;
  height: 100%;
}
.orange-lines, .sheet-edge {
  fill: none;
  stroke: #ffa20c;
  shape-rendering: crispEdges;
}
.teal-lines {
  fill: none;
  stroke: #139a82;
  shape-rendering: crispEdges;
}
.mirror-plane {
  fill: none;
  stroke: #12b312;
  shape-rendering: crispEdges;
}
.view-tools {
  position: absolute;
  top: 7px;
  left: 284px;
  display: flex;
  align-items: center;
  justify-content: space-between;
  width: 426px;
  height: 33px;
  padding: 0 3px;
  border: 1px solid #9ea4a8;
  background: var(--panel);
}
.view-tools button {
  position: relative;
  width: 23px;
  height: 24px;
}
.view-tools .more::after {
  content: "";
  position: absolute;
  right: 0;
  bottom: 0;
  border: 2px solid #555a5c;
  border-top-color: transparent;
  border-left-color: transparent;
}
.forum {
  position: absolute;
  right: 22px;
  bottom: 6px;
}
.forum-name {
  display: flex;
  gap: 6px;
  font-family: "Noto Sans CJK SC", sans-serif;
  font-size: 39px;
  font-style: italic;
  font-weight: 300;
  line-height: 44px;
}
.forum-name span {
  color: #ff6c35;
}
.forum-name b {
  color: #000;
  font-weight: 300;
}
.forum-url {
  color: #96989b;
  font: italic 18px/20px "Liberation Sans", sans-serif;
}
.flame {
  position: absolute;
  top: -14px;
  left: 63px;
}
```
